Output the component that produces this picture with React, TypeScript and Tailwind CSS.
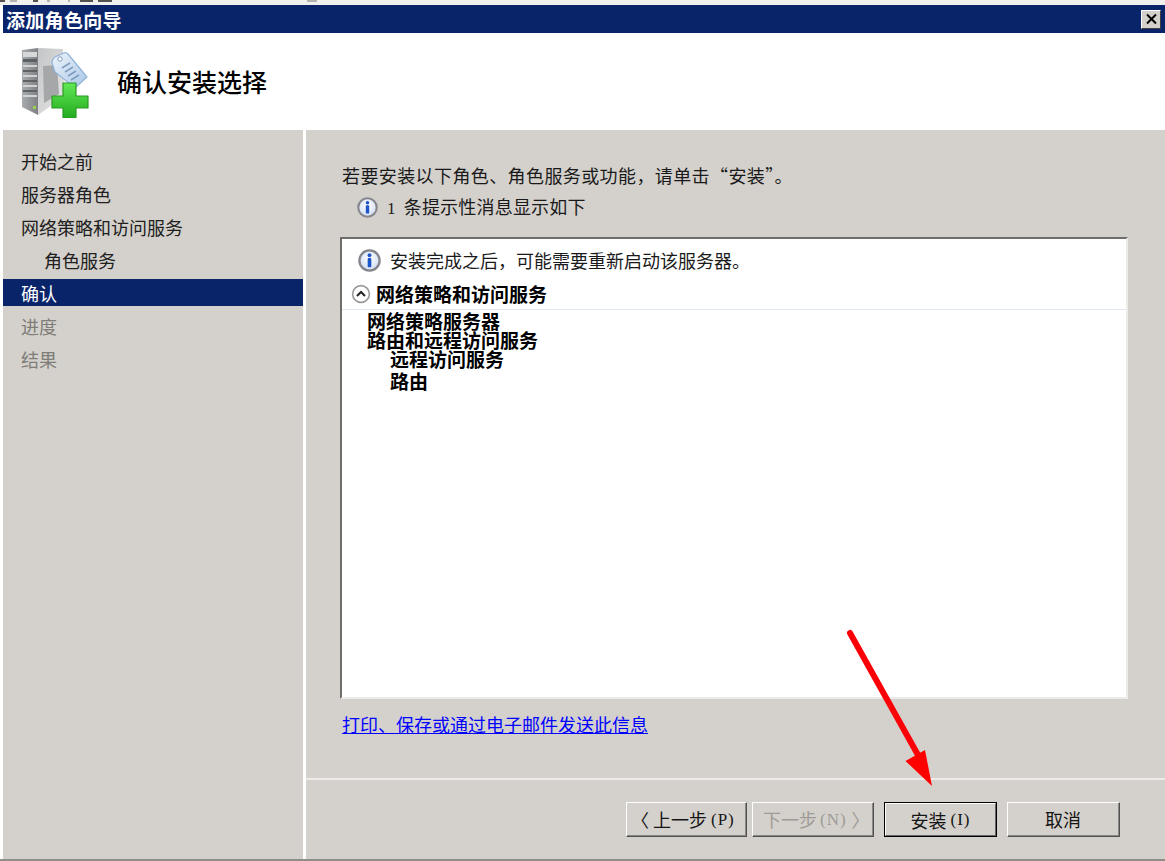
import React from "react";

const FONT = '"Noto Sans CJK SC", "Liberation Sans", sans-serif';
const LATIN = "[font-family:'Liberation_Serif',serif]";

function InfoIcon({ className }: { className: string }) {
  return (
    <svg viewBox="0 0 20 20" className={className}>
      <defs>
        <radialGradient id="infoFill" cx="50%" cy="40%" r="60%">
          <stop offset="0%" stopColor="#ffffff" />
          <stop offset="100%" stopColor="#cfdcf2" />
        </radialGradient>
      </defs>
      <circle cx="10" cy="10" r="8.8" fill="url(#infoFill)" stroke="#85858c" strokeWidth="2" />
      <circle cx="10" cy="5.4" r="1.7" fill="#1c55c8" />
      <rect x="8.4" y="7.8" width="3.2" height="8" rx="0.9" fill="#1c55c8" />
    </svg>
  );
}

function RoleIcon() {
  return (
    <svg viewBox="0 0 72 72" className="w-[72px] h-[72px]">
      <defs>
        <linearGradient id="srvFront" x1="0" x2="1" y1="0" y2="0">
          <stop offset="0%" stopColor="#a9acae" />
          <stop offset="100%" stopColor="#7d8185" />
        </linearGradient>
        <linearGradient id="srvSide" x1="0" x2="1" y1="0" y2="1">
          <stop offset="0%" stopColor="#c4c5c6" />
          <stop offset="100%" stopColor="#e6e6e6" />
        </linearGradient>
        <linearGradient id="tag" x1="0" x2="1" y1="0" y2="1">
          <stop offset="0%" stopColor="#eef4fb" />
          <stop offset="100%" stopColor="#a9c6e6" />
        </linearGradient>
        <linearGradient id="plus" x1="0" x2="0" y1="0" y2="1">
          <stop offset="0%" stopColor="#62e855" />
          <stop offset="100%" stopColor="#22ab1f" />
        </linearGradient>
      </defs>
      <path d="M3 4 L19 2 L19 69 L3 61 Z" fill="url(#srvFront)" />
      <path d="M19 2 L44 3 L46 50 L19 69 Z" fill="url(#srvSide)" />
      <path d="M24 20 L38 19 L40 48 L25 57 Z" fill="#a5a7a9" />
      <rect x="4" y="6" width="14" height="5" fill="#d8d8d8" />
      <rect x="4" y="13" width="14" height="3" fill="#5d6063" />
      <rect x="4" y="19" width="14" height="2" fill="#d4d4d4" />
      <rect x="4" y="24" width="14" height="2" fill="#606366" />
      <rect x="4" y="29" width="14" height="2" fill="#d4d4d4" />
      <rect x="4" y="34" width="14" height="2" fill="#606366" />
      <rect x="4" y="39" width="14" height="2" fill="#d4d4d4" />
      <rect x="4" y="44" width="14" height="2" fill="#606366" />
      <rect x="4" y="49" width="14" height="2" fill="#d4d4d4" />
      <rect x="14" y="60" width="3" height="3" fill="#96d048" />
      <path d="M33 17 Q33 12 38 10 L45 7 Q47 6 49 8 L68 31 L56 42 L36 26 Z" fill="url(#tag)" stroke="#8fb2d8" strokeWidth="1.2" />
      <circle cx="41" cy="13" r="2.2" fill="#ffffff" stroke="#7a99be" strokeWidth="1" />
      <path d="M43 22 L51 17 M46 26 L54 21 M49 30 L57 25 M52 34 L60 29" stroke="#7f9cc0" strokeWidth="1.5" />
      <path d="M44 37 H57 V50 H69 V62 H57 V72 H44 V62 H33 V50 H44 Z" fill="url(#plus)" stroke="#2a9a24" strokeWidth="1.2" strokeLinejoin="round" />
    </svg>
  );
}

function WinButton({ children, disabled, primary, className, inner = "justify-center" }: { children: React.ReactNode; disabled?: boolean; primary?: boolean; className: string; inner?: string }) {
  return (
    <div
      className={`${className} h-[35px] flex items-center justify-center text-[18px] leading-none border ${
        primary ? "border-black" : "border-t-white border-l-white border-r-[#505050] border-b-[#505050]"
      } ${disabled ? "text-[#9d9b97]" : "text-[#151515]"}`}
    >
      <div className={`w-full h-full flex items-center ${inner} ${primary ? "border border-t-white border-l-white border-r-[#666] border-b-[#666]" : "border-r border-b border-r-[#8a8884] border-b-[#8a8884]"}`}>
        {children}
      </div>
    </div>
  );
}

const NAV = [
  { label: "开始之前", cls: "h-[33px] text-[#202020] pl-[18px]" },
  { label: "服务器角色", cls: "h-[33px] text-[#202020] pl-[18px]" },
  { label: "网络策略和访问服务", cls: "h-[33px] text-[#202020] pl-[18px]" },
  { label: "角色服务", cls: "h-[33px] text-[#202020] pl-[41px]" },
  { label: "确认", cls: "h-[27px] my-[3px] text-white bg-[#0a246a] pl-[18px]" },
  { label: "进度", cls: "h-[33px] text-[#7f7d78] pl-[18px]" },
  { label: "结果", cls: "h-[33px] text-[#7f7d78] pl-[18px]" },
];

export default function App() {
  return (
    <div className="w-[1165px] h-[861px] overflow-hidden bg-white flex flex-col relative" style={{ fontFamily: FONT }}>
      <div className="h-[5px] bg-[#f3f1ee]">
        <svg viewBox="0 0 1165 5" className="w-[1165px] h-[5px] block">
          <path d="M0 0 H5 V2 H0 Z M33 0 H38 V2 H33 Z M80 0 H93 V2 H80 Z M98 0 H112 V2 H98 Z" fill="#55534f" />
          <path d="M10 0 H17 V2 H10 Z M47 0 H50 V2 H47 Z M68 0 H70 V2 H68 Z M307 0 H317 V2 H307 Z" fill="#b5b3af" />
        </svg>
      </div>
      <div className="flex-1 min-h-0 flex flex-col pl-[3px] border-b-2 border-[#8f8d89]">
        <div className="h-[28px] bg-[#0a246a] flex items-center justify-between pl-[3px] pr-[4px]">
          <span className="text-white text-[19px] font-bold leading-none tracking-[0.3px]">添加角色向导</span>
          <div className="w-[20px] h-[19px] bg-[#d4d1cc] border border-t-white border-l-white border-r-[#404040] border-b-[#404040] flex items-center justify-center">
            <svg viewBox="0 0 12 12" className="w-[13px] h-[12px]">
              <path d="M1.5 1.5 L10.5 10.5 M10.5 1.5 L1.5 10.5" stroke="#000" strokeWidth="2" />
            </svg>
          </div>
        </div>
        <div className="h-[97px] bg-white flex items-center pl-[16px]">
          <RoleIcon />
          <span className="ml-[26px] text-[25px] font-medium text-black leading-none">确认安装选择</span>
        </div>
        <div className="flex-1 min-h-0 flex">
          <div className="w-[300px] bg-[#d4d1cc] pt-[14px] flex flex-col">
            {NAV.map((n) => (
              <div key={n.label} className={`flex items-center text-[18px] leading-none ${n.cls}`}>
                {n.label}
              </div>
            ))}
          </div>
          <div className="w-[3px] bg-white" />
          <div className="flex-1 min-w-0 bg-[#d4d1cc] flex flex-col">
            <div className="flex-1 min-h-0 pl-[36px] pr-[37px] pt-[33px] flex flex-col">
              <div className="text-[18px] leading-[24px] tracking-[0.4px] text-[#1a1a1a]">若要安装以下角色、角色服务或功能，请单击“安装”。</div>
              <div className="flex items-center mt-[8px] pl-[15px] h-[24px] text-[18px] tracking-[0.2px] text-[#1a1a1a]">
                <InfoIcon className="w-[21px] h-[21px]" />
                <span className="ml-[9px]">
                  <span className={`${LATIN} text-[17px]`}>1</span>
                  <span className="ml-[8px]">条提示性消息显示如下</span>
                </span>
              </div>
              <div className="mt-[18px] -ml-[2px] h-[462px] bg-white border-2 border-t-[#6f6d69] border-l-[#6f6d69] border-r-[#ecebe8] border-b-[#ecebe8] flex flex-col text-black">
                <div className="flex items-center pl-[16px] pt-[7px] h-[35px] text-[18px] text-[#1a1a1a]">
                  <InfoIcon className="w-[23px] h-[23px]" />
                  <span className="ml-[9px]">安装完成之后，可能需要重新启动该服务器。</span>
                </div>
                <div className="flex items-center pl-[9px] pt-[4px] h-[36px] border-b border-[#dfe6f4] text-[19px] font-bold leading-none">
                  <svg viewBox="0 0 20 20" className="w-[20px] h-[20px]">
                    <circle cx="10" cy="10" r="8.4" fill="#fff" stroke="#9a9a9a" strokeWidth="1.6" />
                    <path d="M6 12 L10 8 L14 12" fill="none" stroke="#222" strokeWidth="2" />
                  </svg>
                  <span className="ml-[5px]">网络策略和访问服务</span>
                </div>
                <div className="pl-[25px] pt-[1px] text-[19px] font-bold leading-[19px]">
                  <div>网络策略服务器</div>
                  <div>路由和远程访问服务</div>
                  <div className="pl-[23px]">远程访问服务</div>
                  <div className="pl-[23px] mt-[3px]">路由</div>
                </div>
              </div>
              <a className="mt-[13px] text-[18px] leading-[24px] text-[#0000ff] underline self-start">打印、保存或通过电子邮件发送此信息</a>
            </div>
            <div className="h-[81px] border-t-2 border-[#eeece8] flex items-start justify-end pt-[22px] pr-[45px]">
              <WinButton className="w-[121px]" inner="justify-start pl-[4px]">
                <span>〈</span>
                <span className="ml-[4px]">上一步</span>
                <span className={`${LATIN} text-[17px] tracking-[1px] ml-[4px]`}>(P)</span>
              </WinButton>
              <WinButton className="w-[122px] ml-[5px]" disabled inner="justify-start pl-[10px]">
                <span>下一步</span>
                <span className={`${LATIN} text-[17px] tracking-[1px] ml-[3px]`}>(N)</span>
                <span className="ml-[5px]">〉</span>
              </WinButton>
              <WinButton className="w-[113px] ml-[10px]" primary>
                <span>安装</span>
                <span className={`${LATIN} text-[17px] tracking-[1px] ml-[4px]`}>(I)</span>
              </WinButton>
              <WinButton className="w-[113px] ml-[10px]">取消</WinButton>
            </div>
          </div>
        </div>
      </div>
      <svg className="absolute left-[840px] top-[625px] w-[110px] h-[170px]" viewBox="0 0 110 170">
        <path d="M10 8 L78 130" stroke="#fb0007" strokeWidth="6" strokeLinecap="round" fill="none" />
        <path d="M65.5 136 L85 125 L92 161 Z" fill="#ff0000" />
      </svg>
    </div>
  );
}
